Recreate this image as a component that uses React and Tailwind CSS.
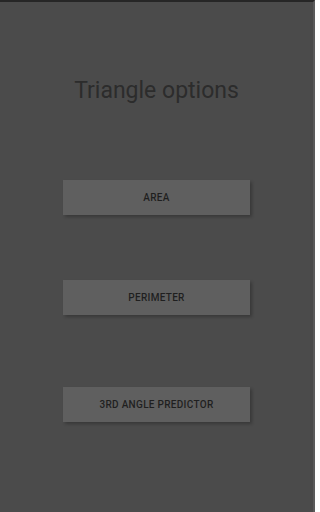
export default function App() {
  const options = [
    { label: 'Area', gap: 'mt-[76px]' },
    { label: 'Perimeter', gap: 'mt-[65px]' },
    { label: '3rd angle predictor', gap: 'mt-[72px]' },
  ];

  return (
    <div
      className="flex h-[512px] w-[315px] flex-col items-center border-t-2 border-r-2 border-t-[#262626] border-r-[#5a5a5a] bg-[#4b4b4b]"
      style={{ fontFamily: 'Roboto, "Liberation Sans", sans-serif' }}
    >
      <h1 className="mt-[76px] h-[26px] text-[23px] leading-[26px] font-normal text-[#2c2c2c]">
        Triangle options
      </h1>

      {options.map((opt) => (
        <button
          key={opt.label}
          className={`${opt.gap} flex h-[35px] w-[187px] items-center justify-center bg-[#5f5f5f] text-[10px] font-medium uppercase tracking-[0.03em] text-[#1f1f1f] shadow-[2px_2px_3px_rgba(0,0,0,0.25)]`}
        >
          {opt.label}
        </button>
      ))}
    </div>
  );
}
